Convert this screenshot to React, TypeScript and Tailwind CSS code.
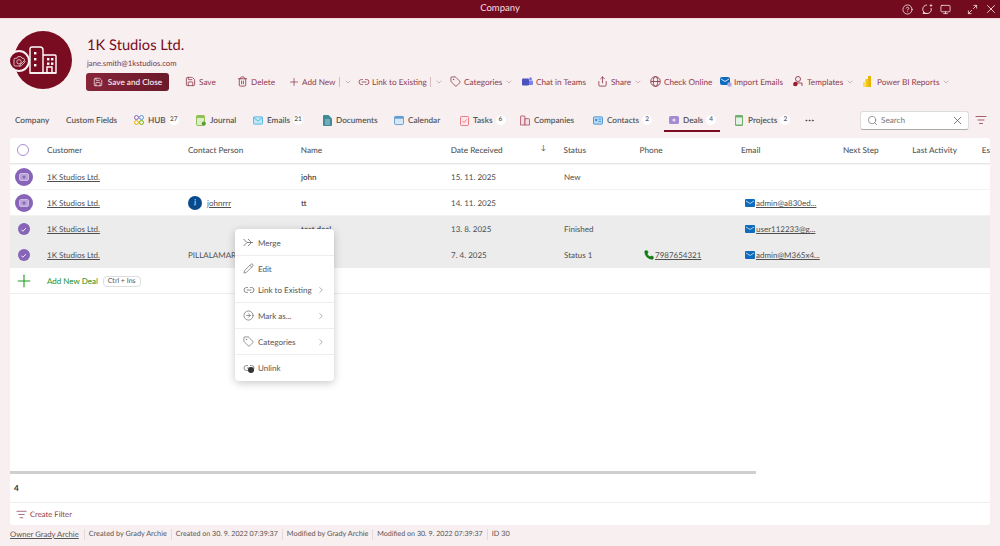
import { ReactNode } from 'react';
import {
  ChevronDown,
  ChevronRight,
  CircleArrowRight,
  CircleHelp,
  Ellipsis,
  Link2,
  ListFilter,
  Maximize2,
  Monitor,
  Pencil,
  Phone,
  Plus,
  Save,
  Search,
  Share,
  Tag,
  Trash2,
  X,
} from 'lucide-react';

function Building({ size = 28 }: { size?: number }) {
  return (
    <svg width={size} height={size} viewBox="0 0 28 28" fill="none" stroke="#fff" strokeWidth="1.4">
      <path d="M1 27V3a2 2 0 0 1 2-2h8a3 3 0 0 1 3 3v23z" />
      <path d="M14 9h12a1 1 0 0 1 1 1v17H14" />
      <path d="M18 27v-6h5v6" />
      <path d="M1 27h26" />
      <g fill="#fff" stroke="none">
        <rect x="5" y="6" width="2.4" height="2.4" />
        <rect x="5" y="12" width="2.4" height="2.4" />
        <rect x="5" y="18" width="2.4" height="2.4" />
        <rect x="18" y="12" width="2.4" height="2.4" />
        <rect x="22" y="12" width="2.4" height="2.4" />
        <rect x="18" y="16.5" width="2.4" height="2.4" />
        <rect x="22" y="16.5" width="2.4" height="2.4" />
      </g>
    </svg>
  );
}

function CameraEdit() {
  return (
    <svg width="13" height="13" viewBox="0 0 13 13" fill="none" stroke="#f3dfe3" strokeWidth="0.8">
      <path d="M7 11H2.2A1.2 1.2 0 0 1 1 9.8V4.5a1.2 1.2 0 0 1 1.2-1.2h1.6l1-1.6h3.2l1 1.6h1.2A1.2 1.2 0 0 1 11.4 4.5V6" />
      <circle cx="6" cy="6.8" r="2.2" />
      <path d="M12.2 6.8l-4 4-1.5.5.5-1.5 4-4z" fill="#7a0c22" />
    </svg>
  );
}

function Tile({ color, light }: { color: string; light: string }) {
  return (
    <svg width="11" height="11" viewBox="0 0 11 11">
      <rect x="0.5" y="1" width="10" height="9" rx="1.5" fill={light} stroke={color} />
      <rect x="0.5" y="1" width="10" height="2.5" fill={color} />
    </svg>
  );
}

function ToolItem({ className, icon, label, chevron, split }: { className: string; icon: ReactNode; label: string; chevron?: boolean; split?: boolean }) {
  return (
    <div className={`flex items-center text-[#8f3a4c] ${className}`}>
      <span className="flex w-[14px] shrink-0 justify-start">{icon}</span>
      <span className="whitespace-nowrap">{label}</span>
      {split && <span className="ml-[3px] h-[10px] w-px bg-[#d8b8bf]" />}
      {chevron && <ChevronDown size={8} strokeWidth={1.6} className={split ? 'ml-[4px] text-[#a9808a]' : 'ml-[3px] text-[#a9808a]'} />}
    </div>
  );
}

function TabItem({ className, icon, label, badge, active }: { className: string; icon?: ReactNode; label: string; badge?: string; active?: boolean }) {
  return (
    <div className={`relative flex h-[22px] items-center text-[#555] ${className}`}>
      {icon && <span className="mr-[4px] flex w-[10px] shrink-0 justify-center">{icon}</span>}
      <span className="whitespace-nowrap font-semibold">{label}</span>
      {badge && <span className="ml-[3px] flex h-[10px] min-w-[10px] items-center justify-center rounded-full bg-white text-[6.5px] font-semibold leading-none">{badge}</span>}
      {active && <span className="absolute bottom-[-1px] left-[-5px] h-[2px] w-[56px] bg-[#7a0c22]" />}
    </div>
  );
}

function Mail() {
  return (
    <svg width="10" height="8" viewBox="0 0 10 8" className="mr-[1px] shrink-0">
      <rect width="10" height="8" rx="1" fill="#0f6cbd" />
      <path d="M1 2l4 2.5L9 2" stroke="#cfe4f7" fill="none" strokeWidth="0.8" />
    </svg>
  );
}

function DealIcon({ selected }: { selected?: boolean }) {
  if (selected) {
    return (
      <div className="flex h-[12px] w-[12px] items-center justify-center rounded-full bg-[#8764b8]">
        <svg width="7" height="7" viewBox="0 0 8 8" fill="none" stroke="#fff" strokeWidth="1">
          <path d="M1.5 4.2l1.8 1.8L6.8 2.4" />
        </svg>
      </div>
    );
  }
  return (
    <div className="flex h-[18px] w-[18px] items-center justify-center rounded-full bg-[#8764b8]">
      <svg width="10" height="8" viewBox="0 0 10 8">
        <rect x="0.5" y="0.5" width="9" height="7" rx="1.5" fill="#b9a3d8" stroke="#d9cdea" strokeWidth="0.8" />
        <circle cx="5" cy="4" r="1.5" fill="#8764b8" />
      </svg>
    </div>
  );
}

function Row({ selected, contact, name, date, status, phone, email }: { selected?: boolean; contact?: ReactNode; name?: string; date: string; status?: string; phone?: string; email?: string }) {
  return (
    <div className={`flex h-[26px] shrink-0 items-center text-[8px] text-[#505050] ${selected ? 'bg-[#ececec]' : 'border-b border-[#f3f3f3]'}`}>
      <div className="mr-[10px] flex w-[27px] justify-center">
        <DealIcon selected={selected} />
      </div>
      <div className="w-[141px] underline">1K Studios Ltd.</div>
      <div className="w-[113px]">{contact}</div>
      <div className="w-[150px] font-semibold text-[#444]">{name}</div>
      <div className="w-[113px]">{date}</div>
      <div className="w-[76px]">{status}</div>
      <div className="flex w-[101px] items-center pl-[4px]">
        {phone && (
          <>
            <Phone size={10} fill="#107c10" stroke="#107c10" className="mr-[1px] w-[10px]" />
            <span className="underline">{phone}</span>
          </>
        )}
      </div>
      <div className="flex w-[102px] items-center pl-[4px]">
        {email && (
          <>
            <Mail />
            <span className="underline">{email}</span>
          </>
        )}
      </div>
    </div>
  );
}

function MenuItem({ icon, label, arrow }: { icon: ReactNode; label: string; arrow?: boolean }) {
  return (
    <div className="flex h-[21px] items-center pl-[8px] pr-[8px] text-[8px] text-[#555]">
      <span className="flex w-[15px] shrink-0">{icon}</span>
      <span className="flex-1 whitespace-nowrap">{label}</span>
      {arrow && <ChevronRight size={10} strokeWidth={1.6} className="text-[#888]" />}
    </div>
  );
}

export default function App() {
  return (
    <div className="relative flex h-[546px] w-[1000px] flex-col overflow-hidden bg-[#f8eff0] font-['Lato',sans-serif] text-[8.2px] [text-rendering:geometricPrecision]">
      {/* title bar */}
      <div className="relative flex h-[18px] shrink-0 items-center justify-center bg-[#730b1f] pt-px text-[9.5px] text-[#f3dfe3]">
        Company
        <div className="absolute right-[2px] top-0 flex h-[18px] items-center text-[#f3dfe3]">
          <CircleHelp size={11} strokeWidth={1.8} className="mr-[8px]" />
          <svg width="12" height="12" viewBox="0 0 12 12" fill="none" stroke="currentColor" strokeWidth="0.9" className="mr-[7px]">
            <path d="M6 2a4.2 4.2 0 1 0 0 8.5H2l1-1.5" />
            <path d="M10 5a4 4 0 0 1-4 5.5" />
            <path d="M10 0.5l.5 1.4 1.4.5-1.4.5L10 4.4l-.5-1.5-1.4-.5 1.4-.5z" fill="currentColor" stroke="none" />
          </svg>
          <Monitor size={11} strokeWidth={1.8} className="mr-[16px]" />
          <Maximize2 size={11} strokeWidth={1.8} className="mr-[6px]" />
          <X size={14} strokeWidth={1.5} />
        </div>
      </div>
      <div className="h-px shrink-0 bg-[#f3d9dd]" />

      {/* company header */}
      <div className="flex h-[90px] shrink-0 pl-[14px] pt-[12px]">
        <div className="relative flex h-[58px] w-[58px] shrink-0 items-center justify-center rounded-full bg-[#7a0c22]">
          <Building />
          <div className="absolute left-[-6px] top-[19px] flex h-[22px] w-[22px] items-center justify-center rounded-full border-2 border-[#f8eff0] bg-[#7a0c22]">
            <CameraEdit />
          </div>
        </div>
        <div className="ml-[15px] flex flex-col">
          <div className="mt-[3px] text-[14.7px] leading-[22px] text-[#7a0c22]">1K Studios Ltd.</div>
          <div className="mt-[1px] text-[7.7px] leading-[12px] text-[#7a3545]">jane.smith@1kstudios.com</div>
          <div className="mt-[4px] flex items-center">
            <div className="-ml-px flex h-[18px] w-[83px] items-center justify-center rounded-[3px] bg-gradient-to-r from-[#87243a] to-[#6a1a2a] text-[8.2px] font-semibold text-[#f8e8eb]">
              <Save size={10} strokeWidth={1.8} className="mr-[5px]" />
              Save and Close
            </div>
            <div className="ml-[16px] flex">
              <ToolItem className="w-[52px]" icon={<Save size={11} strokeWidth={1.8} />} label="Save" />
              <ToolItem className="w-[51px]" icon={<Trash2 size={11} strokeWidth={1.8} />} label="Delete" />
              <ToolItem className="w-[70px]" icon={<Plus size={12} strokeWidth={1.5} />} label="Add New" chevron split />
              <ToolItem className="w-[92px]" icon={<Link2 size={12} strokeWidth={1.6} />} label="Link to Existing" chevron split />
              <ToolItem className="w-[72px]" icon={<Tag size={11} strokeWidth={1.8} />} label="Categories" chevron />
              <ToolItem
                className="w-[75px]"
                icon={
                  <svg width="11" height="10" viewBox="0 0 11 10">
                    <circle cx="8.5" cy="1.8" r="1.5" fill="#7b83eb" />
                    <rect x="6" y="3.5" width="5" height="4.5" rx="1" fill="#7b83eb" />
                    <rect y="1.5" width="7" height="7" rx="1" fill="#4b53bc" />
                  </svg>
                }
                label="Chat in Teams"
              />
              <ToolItem className="w-[53px]" icon={<Share size={11} strokeWidth={1.8} />} label="Share" chevron />
              <ToolItem
                className="w-[70px]"
                icon={
                  <svg width="11" height="11" viewBox="0 0 11 11" fill="none" stroke="currentColor" strokeWidth="0.9">
                    <circle cx="5.5" cy="5.5" r="4.8" />
                    <ellipse cx="5.5" cy="5.5" rx="2.2" ry="4.8" />
                    <path d="M1 5.5h9" />
                  </svg>
                }
                label="Check Online"
              />
              <ToolItem
                className="w-[73px]"
                icon={
                  <svg width="12" height="11" viewBox="0 0 12 11">
                    <rect y="1" width="10" height="8" rx="2" fill="#0f6cbd" />
                    <path d="M1 3l4 2.5L9 3" stroke="#cfe4f7" fill="none" />
                    <circle cx="9.5" cy="8.5" r="2.3" fill="#b4a7e6" />
                  </svg>
                }
                label="Import Emails"
              />
              <ToolItem
                className="w-[70px]"
                icon={
                  <svg width="10" height="11" viewBox="0 0 10 11" fill="none" stroke="currentColor" strokeWidth="0.9">
                    <circle cx="5" cy="3" r="2.5" />
                    <path d="M1 10V7h8v3" />
                    <circle cx="2.5" cy="8" r="2.2" fill="#9b1c31" stroke="none" />
                  </svg>
                }
                label="Templates"
                chevron
              />
              <ToolItem
                className="w-[88px]"
                icon={
                  <svg width="8" height="11" viewBox="0 0 8 11" className="-mr-[2px]">
                    <rect x="5" width="3" height="11" fill="#e8b400" />
                    <rect x="2.5" y="3" width="3" height="8" fill="#f2c811" />
                    <rect y="6" width="3" height="5" fill="#fadf6b" />
                  </svg>
                }
                label="Power BI Reports"
                chevron
              />
            </div>
          </div>
        </div>
      </div>

      {/* tabs */}
      <div className="flex h-[22px] shrink-0 items-center pl-[15px]">
        <TabItem className="w-[51px]" label="Company" />
        <TabItem className="w-[68px]" label="Custom Fields" />
        <TabItem
          className="w-[62px]"
          icon={
            <svg width="10" height="10" viewBox="0 0 10 10" fill="none" strokeWidth="1">
              <circle cx="2.5" cy="2.5" r="2" stroke="#8764b8" />
              <circle cx="7.5" cy="2.5" r="2" stroke="#4f9bd9" />
              <circle cx="2.5" cy="7.5" r="2" stroke="#e8b400" />
              <circle cx="7.5" cy="7.5" r="2" stroke="#6bb700" />
            </svg>
          }
          label="HUB"
          badge="27"
        />
        <TabItem
          className="w-[57px]"
          icon={
            <svg width="10" height="11" viewBox="0 0 10 11">
              <rect x="0.5" y="0.5" width="8" height="10" rx="1.2" fill="#dcedc8" stroke="#8fbf55" />
              <rect x="0.5" y="0.5" width="8" height="2.5" fill="#8fbf55" />
              <circle cx="7.8" cy="8.6" r="2.1" fill="#5c9e2e" />
            </svg>
          }
          label="Journal"
        />
        <TabItem
          className="w-[69px]"
          icon={
            <svg width="11" height="9" viewBox="0 0 11 9">
              <rect x="0.5" y="0.5" width="10" height="8" rx="1" fill="#bfe6f6" stroke="#4fb6de" />
              <path d="M1 1.5l4.5 3.5L10 1.5" stroke="#4fb6de" fill="none" />
            </svg>
          }
          label="Emails"
          badge="21"
        />
        <TabItem
          className="w-[72px]"
          icon={
            <svg width="9" height="11" viewBox="0 0 9 11">
              <path d="M0 1a1 1 0 0 1 1-1h4.5L9 3.5V10a1 1 0 0 1-1 1H1a1 1 0 0 1-1-1z" fill="#3f8a96" />
              <path d="M2 5h5M2 7h5M2 9h5" stroke="#d7edf0" strokeWidth="0.7" />
            </svg>
          }
          label="Documents"
        />
        <TabItem className="w-[65px]" icon={<Tile color="#5f9bd1" light="#d6e7f6" />} label="Calendar" />
        <TabItem
          className="w-[61px]"
          icon={
            <svg width="9" height="11" viewBox="0 0 9 11" fill="#fde7e9" stroke="#e8606f" strokeWidth="0.8">
              <rect x="0.5" y="1.5" width="8" height="9" rx="1" />
              <path d="M2.5 6l1.5 1.5L6.5 4.5" fill="none" />
            </svg>
          }
          label="Tasks"
          badge="6"
        />
        <TabItem
          className="w-[73px]"
          icon={
            <svg width="11" height="11" viewBox="0 0 11 11" fill="#f3dfe3" stroke="#a33a4f" strokeWidth="0.8">
              <path d="M0.5 10.5V1.5a1 1 0 0 1 1-1h3a1 1 0 0 1 1 1v9z" />
              <path d="M5.5 3.5h4a1 1 0 0 1 1 1v6h-5z" />
            </svg>
          }
          label="Companies"
        />
        <TabItem
          className="w-[76px]"
          icon={
            <svg width="11" height="9" viewBox="0 0 11 9">
              <rect x="0.5" y="0.5" width="10" height="8" rx="1" fill="#bcdcf5" stroke="#3f8fd2" />
              <circle cx="3.5" cy="4" r="1.3" fill="#3f8fd2" />
              <path d="M6 3h3M6 5.5h3" stroke="#3f8fd2" />
            </svg>
          }
          label="Contacts"
          badge="2"
        />
        <TabItem
          className="w-[65px]"
          active
          icon={
            <svg width="10" height="8" viewBox="0 0 10 8">
              <rect width="10" height="8" rx="1.5" fill="#a78bd0" />
              <circle cx="5" cy="4" r="1.6" fill="#e6dcf3" />
            </svg>
          }
          label="Deals"
          badge="4"
        />
        <TabItem
          className="w-[70px]"
          icon={
            <svg width="8" height="11" viewBox="0 0 8 11">
              <rect width="8" height="11" rx="1.2" fill="#6fae6f" />
              <rect x="1" y="2.5" width="6" height="7" fill="#e3f2e3" />
            </svg>
          }
          label="Projects"
          badge="2"
        />
        <Ellipsis size={11} className="text-[#444]" />
        <div className="ml-[45px] flex h-[19px] w-[109px] items-center rounded-[3px] border border-[#ddd] border-b-[#aaa] bg-white px-[6px] text-[#777]">
          <Search size={11} strokeWidth={1.6} className="mr-[3px]" />
          <span className="flex-1">Search</span>
          <X size={13} strokeWidth={1.4} className="-mr-[2px] text-[#555]" />
        </div>
        <ListFilter size={12} strokeWidth={1.6} className="ml-[6px] text-[#8f3a4c]" />
      </div>

      {/* deals table */}
      <div className="ml-[10px] mt-[7px] flex h-[387px] w-[980px] shrink-0 flex-col overflow-hidden rounded-[3px] bg-white">
        <div className="flex h-[26px] shrink-0 items-center whitespace-nowrap border-b border-[#e6e6e6] pb-[1px] font-medium text-[#555] shadow-[0_1px_1px_rgba(0,0,0,0.04)]">
          <div className="mr-[10px] flex w-[27px] justify-center">
            <div className="h-[12px] w-[12px] rounded-full border border-[#a98fd0]" />
          </div>
          <div className="w-[141px]">Customer</div>
          <div className="w-[113px]">Contact Person</div>
          <div className="w-[150px]">Name</div>
          <div className="flex w-[113px] items-center">
            <span className="w-[90px]">Date Received</span>
            <span className="-mt-[3px] text-[7px]">↓</span>
          </div>
          <div className="w-[76px]">Status</div>
          <div className="w-[101.5px]">Phone</div>
          <div className="w-[102px]">Email</div>
          <div className="w-[69.5px]">Next Step</div>
          <div className="w-[69.5px]">Last Activity</div>
          <div>Es</div>
        </div>
        <Row name="john" date="15. 11. 2025" status="New" />
        <Row
          contact={
            <div className="flex items-center">
              <div className="mr-[5px] flex h-[14px] w-[14px] items-center justify-center rounded-full bg-[#0b4a8a] text-[7px] text-white">j</div>
              <span className="underline">johnrrr</span>
            </div>
          }
          name="tt"
          date="14. 11. 2025"
          email="admin@a830ed..."
        />
        <Row selected name="test deal" date="13. 8. 2025" status="Finished" email="user112233@g..." />
        <Row
          selected
          contact={<span className="whitespace-nowrap">PILLALAMARRI</span>}
          date="7. 4. 2025"
          status="Status 1"
          phone="7987654321"
          email="admin@M365x4..."
        />
        <div className="flex h-[26px] shrink-0 items-center border-b border-[#eee]">
          <div className="mr-[10px] flex w-[27px] justify-center">
            <Plus size={20} strokeWidth={1.3} color="#1a9a1a" />
          </div>
          <span className="mt-px text-[8px] text-[#1a8f1a]">Add New Deal</span>
          <span className="ml-[5px] mt-px flex h-[11px] items-center rounded-[4px] border border-[#ddd] px-[4px] text-[7px] text-[#555]">Ctrl + Ins</span>
        </div>
        <div className="flex-1" />
        <div className="h-[3px] w-[746px] shrink-0 bg-[#cfcfcf]" />
        <div className="flex h-[29px] shrink-0 items-center border-b border-[#eee] pl-[4px] font-bold text-[#333]">4</div>
        <div className="flex h-[22px] shrink-0 items-center pl-[6px] pt-px text-[7.7px] text-[#8f3a4c]">
          <ListFilter size={11} strokeWidth={1.6} className="mr-[3px]" />
          Create Filter
        </div>
      </div>

      {/* status bar */}
      <div className="flex h-[19px] items-center whitespace-nowrap pl-[10px] text-[7.3px] text-[#555]">
        <span className="border-r border-[#e5d9db] pr-[5px] text-[7.7px] underline">Owner Grady Archie</span>
        <span className="border-r border-[#e5d9db] px-[4px]">Created by Grady Archie</span>
        <span className="border-r border-[#e5d9db] px-[4px] text-[7.1px]">Created on 30. 9. 2022 07:39:37</span>
        <span className="border-r border-[#e5d9db] px-[4px]">Modified by Grady Archie</span>
        <span className="border-r border-[#e5d9db] px-[4px] text-[7.1px]">Modified on 30. 9. 2022 07:39:37</span>
        <span className="px-[4px]">ID 30</span>
      </div>

      {/* context menu */}
      <div className="absolute left-[235px] top-[229px] w-[99px] rounded-[4px] bg-white py-[3px] shadow-[0_2px_8px_rgba(0,0,0,0.22)]">
        <MenuItem
          icon={
            <svg width="11" height="9" viewBox="0 0 11 9" fill="none" stroke="#666" strokeWidth="0.8">
              <path d="M0.5 1l3.5 3.5L0.5 8M5 1l3.5 3.5L5 8M0.5 4.5h0M4 4.5h6" />
            </svg>
          }
          label="Merge"
        />
        <div className="my-[2px] h-px bg-[#eee]" />
        <MenuItem icon={<Pencil size={11} strokeWidth={1.5} color="#666" />} label="Edit" />
        <MenuItem icon={<Link2 size={12} strokeWidth={1.5} color="#666" />} label="Link to Existing" arrow />
        <div className="my-[2px] h-px bg-[#eee]" />
        <MenuItem icon={<CircleArrowRight size={11} strokeWidth={1.5} color="#666" />} label="Mark as..." arrow />
        <div className="my-[2px] h-px bg-[#eee]" />
        <MenuItem icon={<Tag size={11} strokeWidth={1.5} color="#666" />} label="Categories" arrow />
        <div className="my-[2px] h-px bg-[#eee]" />
        <MenuItem
          icon={
            <span className="relative flex">
              <Link2 size={12} strokeWidth={1.5} color="#666" />
              <span className="absolute left-[5px] top-[5px] h-[6px] w-[6px] rounded-full bg-[#333]" />
            </span>
          }
          label="Unlink"
        />
      </div>
    </div>
  );
}
